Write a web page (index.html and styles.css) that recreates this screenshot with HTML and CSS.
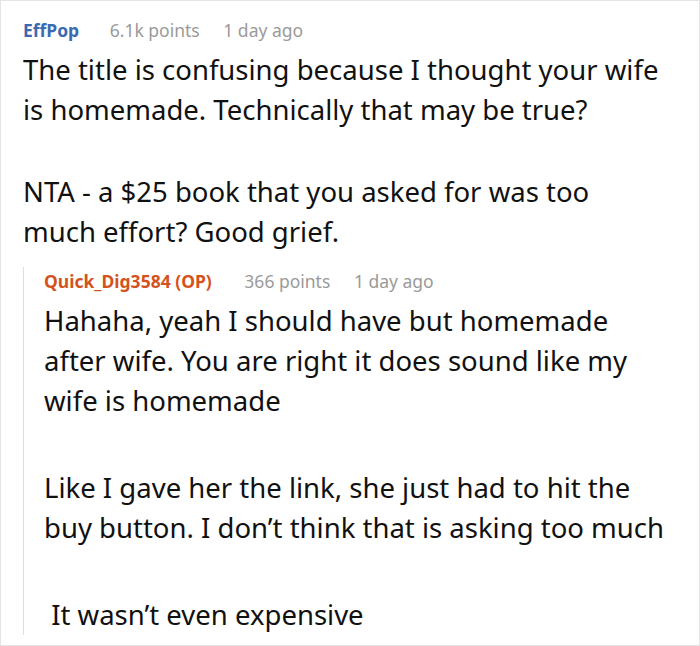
FILE: index.html
```html
<!DOCTYPE html>
<html>
<head>
<meta charset="utf-8">
<link rel="stylesheet" href="styles.css">
</head>
<body>
<div class="frame">
  <div class="comment">
    <div class="meta">
      <span class="author">EffPop</span>
      <span class="points">6.1k points</span>
      <span class="time">1 day ago</span>
    </div>
    <div class="body">
      <p>The title is confusing because I thought your wife<br>is homemade. Technically that may be true?</p>
      <p>NTA - a $25 book that you asked for was too<br>much effort? Good grief.</p>
    </div>
    <div class="reply">
      <div class="meta">
        <span class="author op">Quick_Dig3584 (OP)</span>
        <span class="points">366 points</span>
        <span class="time">1 day ago</span>
      </div>
      <div class="body">
        <p>Hahaha, yeah I should have but homemade<br>after wife. You are right it does sound like my<br>wife is homemade</p>
        <p>Like I gave her the link, she just had to hit the<br>buy button. I don’t think that is asking too much</p>
        <p>&nbsp;It wasn’t even expensive</p>
      </div>
    </div>
  </div>
</div>
</body>
</html>
```

FILE: styles.css
```css
html, body {
  margin: 0;
  padding: 0;
  background: #fff;
}
.frame {
  box-sizing: border-box;
  width: 700px;
  height: 646px;
  border: 1px solid #e4e4e4;
  overflow: hidden;
  font-family: "Noto Sans", sans-serif;
  color: #111;
}
.comment {
  padding: 15px 0 0 22px;
}
.meta {
  font-size: 17.5px;
  line-height: 28px;
  white-space: nowrap;
}
.author {
  font-weight: 700;
  color: #3a6bb2;
  margin-right: 26px;
}
.author.op {
  color: #d4531c;
  margin-right: 28px;
}
.points {
  color: #9a9a9a;
  margin-right: 19px;
}
.time {
  color: #9a9a9a;
}
.body {
  margin-top: 6px;
  font-size: 27.5px;
  line-height: 40px;
  white-space: nowrap;
}
.body p {
  margin: 0 0 42px 0;
}
.body p:last-child {
  margin-bottom: 0;
}
.reply {
  margin-top: 24px;
  border-left: 1px solid #dedede;
  padding-left: 20px;
}
.reply .meta {
  margin-top: -9px;
}
.reply .body p {
  margin-bottom: 47px;
}
.reply .body p:last-child {
  margin-bottom: -10px;
}
```
